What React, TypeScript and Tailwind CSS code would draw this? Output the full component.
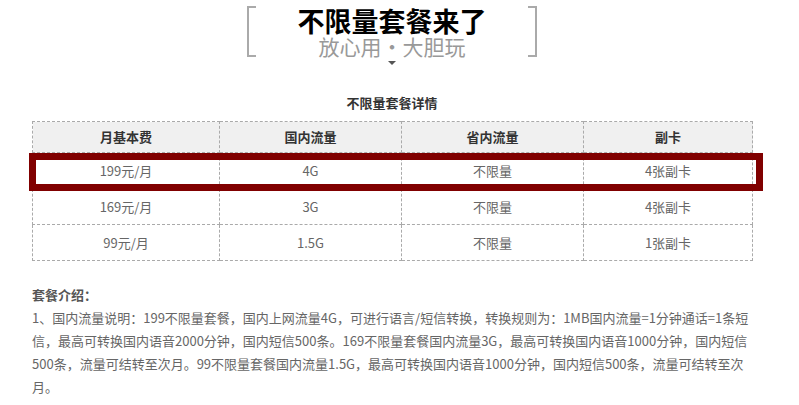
import React from "react";

const rows = [
  { price: "199元/月", national: "4G", province: "不限量", cards: "4张副卡" },
  { price: "169元/月", national: "3G", province: "不限量", cards: "4张副卡" },
  { price: "99元/月", national: "1.5G", province: "不限量", cards: "1张副卡" },
];

const introLines = [
  "1、国内流量说明：199不限量套餐，国内上网流量4G，可进行语言/短信转换，转换规则为：1MB国内流量=1分钟通话=1条短",
  "信，最高可转换国内语音2000分钟，国内短信500条。169不限量套餐国内流量3G，最高可转换国内语音1000分钟，国内短信",
  "500条，流量可结转至次月。99不限量套餐国内流量1.5G，最高可转换国内语音1000分钟，国内短信500条，流量可结转至次",
  "月。",
];

export default function App() {
  return (
    <div className="w-[799px] h-[405px] overflow-hidden bg-white font-['Noto_Sans_CJK_SC','Noto_Sans',sans-serif]">
      <div className="ml-[32px] w-[720px] flex flex-col">
        {/* heading with brackets */}
        <div className="mt-[6px] flex justify-center">
          <div className="w-[9px] h-[51px] border-y-2 border-l-2 border-[#aaa]" />
          <div className="w-[272px] flex flex-col items-center">
            <h1 className="text-[27px] leading-[29px] font-bold text-black">不限量套餐来了</h1>
            <p className="text-[21px] leading-[23px] text-[#999]">放心用·大胆玩</p>
          </div>
          <div className="w-[9px] h-[51px] border-y-2 border-r-2 border-[#aaa]" />
        </div>
        <div className="mx-auto mt-[3px] w-0 h-0 border-l-[4px] border-r-[4px] border-t-[4px] border-l-transparent border-r-transparent border-t-[#555]" />

        <h2 className="mt-[28px] text-center text-[13px] leading-[20px] font-bold text-[#333]">
          不限量套餐详情
        </h2>

        {/* plan table */}
        <div className="relative mt-[8px]">
          <table className="w-[720px] table-fixed border-collapse text-[13px] text-center">
            <colgroup>
              <col className="w-[187px]" />
              <col className="w-[182px]" />
              <col className="w-[182px]" />
              <col className="w-[169px]" />
            </colgroup>
            <thead>
              <tr className="h-[31px] bg-[#f0f0f0] text-[#333] font-bold">
                <th className="border border-dashed border-[#aaa]">月基本费</th>
                <th className="border border-dashed border-[#aaa]">国内流量</th>
                <th className="border border-dashed border-[#aaa]">省内流量</th>
                <th className="border border-dashed border-[#aaa]">副卡</th>
              </tr>
            </thead>
            <tbody className="text-[#666]">
              {rows.map((r) => (
                <tr key={r.price} className="h-[36px]">
                  <td className="border border-dashed border-[#aaa]">{r.price}</td>
                  <td className="border border-dashed border-[#aaa]">{r.national}</td>
                  <td className="border border-dashed border-[#aaa]">{r.province}</td>
                  <td className="border border-dashed border-[#aaa]">{r.cards}</td>
                </tr>
              ))}
            </tbody>
          </table>
          {/* highlight over the first plan */}
          <div className="absolute left-[-3px] top-[32px] w-[734px] h-[38px] border-[7px] border-[#800000] pointer-events-none" />
        </div>

        {/* intro */}
        <div className="mt-[22px] text-[13px] leading-[23px] text-[#666]">
          <p className="font-bold text-[#555]">套餐介绍：</p>
          {introLines.map((l) => (
            <p key={l} className="whitespace-nowrap">{l}</p>
          ))}
        </div>
      </div>
    </div>
  );
}
